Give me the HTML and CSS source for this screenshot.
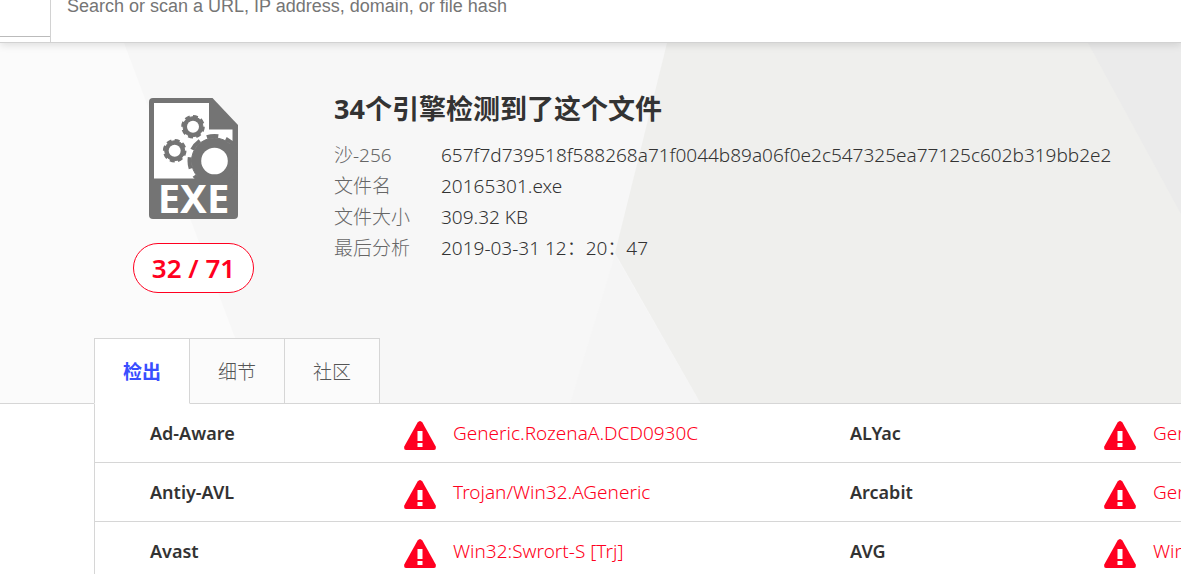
FILE: index.html
```html
<!DOCTYPE html>
<html lang="zh-CN">
<head>
  <meta charset="UTF-8" />
  <meta name="viewport" content="width=device-width, initial-scale=1.0"/>
  <title>文件分析</title>
  <link rel="stylesheet" href="styles.css">
</head>
<body>

  <!-- shared icons -->
  <svg class="defs" width="0" height="0" aria-hidden="true">
    <symbol id="warning" viewBox="0 0 32 34">
      <path fill="#ff0020" d="M13.6 6.6Q16 3.4 18.4 6.6L31.6 30.2Q32.6 34 30 34H2Q-.6 34 .4 30.2Z"/>
      <path fill="#fff" d="M13.5 15h5v10h-5zM13.5 27h5v4h-5z"/>
    </symbol>
  </svg>

  <header class="topbar">
    <div class="topbar-menu"></div>
    <input class="search" type="text" aria-label="Search" placeholder="Search or scan a URL, IP address, domain, or file hash">
  </header>

  <section class="summary">
    <svg class="summary-bg" viewBox="0 0 1181 361" preserveAspectRatio="xMinYMin slice" aria-hidden="true">
      <path fill="#fbfbfb" d="M0 0H124L260 361H0Z"/>
      <path fill="#f5f5f5" d="M615 212L570 361H701Z"/>
      <path fill="#efefed" d="M667 0H1181V361H701L615 210Z"/>
      <path fill="#ebebeb" d="M1088 0H1181V171Z"/>
    </svg>

    <div class="summary-main">
      <div class="file">
        <svg class="file-icon" viewBox="0 0 89 121" role="img" aria-label="EXE">
          <path fill="#747474" d="M4 0H63.5L89 27V117Q89 121 85 121H4Q0 121 0 117V4Q0 0 4 0Z"/>
          <path fill="#fff" d="M5 5H60V31.5H83.5V43L66 64L48 80.5H5Z"/>
          <g fill="#747474" stroke="#747474">
            <circle cx="44" cy="28.7" r="10"/>
            <circle cx="44" cy="28.7" r="10.5" fill="none" stroke-width="2.6" pathLength="16" stroke-dasharray="1.2 .8"/>
            <circle cx="25.7" cy="52.7" r="10"/>
            <circle cx="25.7" cy="52.7" r="10.5" fill="none" stroke-width="2.6" pathLength="16" stroke-dasharray="1.2 .8"/>
            <circle cx="65.5" cy="63" r="23"/>
            <circle cx="65.5" cy="63" r="25" fill="none" stroke-width="4" pathLength="16" stroke-dasharray="1.2 .8" stroke-dashoffset=".8"/>
          </g>
          <circle fill="#fff" cx="44" cy="28.7" r="6"/>
          <circle fill="#fff" cx="25.7" cy="52.7" r="6"/>
          <circle fill="#fff" cx="65.5" cy="63" r="13.3"/>
          <text class="file-type" x="44.5" y="115" text-anchor="middle">EXE</text>
        </svg>
        <div class="score">32 / 71</div>
      </div>

      <div class="info">
        <h1>34个引擎检测到了这个文件</h1>
        <dl class="details">
          <dt>沙-256</dt>
          <dd>657f7d739518f588268a71f0044b89a06f0e2c547325ea77125c602b319bb2e2</dd>
          <dt>文件名</dt>
          <dd>20165301.exe</dd>
          <dt>文件大小</dt>
          <dd>309.32 KB</dd>
          <dt>最后分析</dt>
          <dd>2019-03-31 12：20：47</dd>
        </dl>
      </div>
    </div>

    <nav class="tabs">
      <button class="tab active" type="button">检出</button>
      <button class="tab" type="button">细节</button>
      <button class="tab" type="button">社区</button>
    </nav>
  </section>

  <main class="results">
    <table>
      <tbody>
        <tr>
          <th scope="row">Ad-Aware</th>
          <td class="icon"><svg><use href="#warning"/></svg></td>
          <td>Generic.RozenaA.DCD0930C</td>
          <th scope="row">ALYac</th>
          <td class="icon"><svg><use href="#warning"/></svg></td>
          <td>Generic.RozenaA.DCD0930C</td>
        </tr>
        <tr>
          <th scope="row">Antiy-AVL</th>
          <td class="icon"><svg><use href="#warning"/></svg></td>
          <td>Trojan/Win32.AGeneric</td>
          <th scope="row">Arcabit</th>
          <td class="icon"><svg><use href="#warning"/></svg></td>
          <td>Generic.RozenaA.DCD0930C</td>
        </tr>
        <tr>
          <th scope="row">Avast</th>
          <td class="icon"><svg><use href="#warning"/></svg></td>
          <td>Win32:Swrort-S [Trj]</td>
          <th scope="row">AVG</th>
          <td class="icon"><svg><use href="#warning"/></svg></td>
          <td>Win32:Swrort-S [Trj]</td>
        </tr>
      </tbody>
    </table>
  </main>

</body>
</html>
```
FILE: styles.css
```css
* {
  box-sizing: border-box;
}

body {
  margin: 0;
  font-family: "Noto Sans", "Noto Sans CJK SC", sans-serif;
  font-size: 18px;
  color: #333;
  background: white;
  overflow: hidden;
}

.defs {
  position: absolute;
}

.topbar {
  position: relative;
  z-index: 1;
  display: flex;
  align-items: flex-end;
  height: 43px;
  overflow: hidden;
  background: white;
  border-bottom: 1px solid #d2d2d2;
  box-shadow: 0 2px 8px rgba(0,0,0,0.12);
}

.topbar-menu {
  width: 50px;
  height: 37px;
  margin-bottom: 5px;
  border-bottom: 1px solid #bbb;
}

.search {
  flex: 1;
  height: 72px;
  padding: 0 16px;
  border: none;
  border-left: 1px solid #d2d2d2;
  outline: none;
  font-family: "Liberation Sans", Arial, sans-serif;
  font-size: 18px;
}

.search::placeholder {
  color: #757575;
}

.summary {
  position: relative;
  background: #f7f7f7;
  border-bottom: 1px solid #d6d6d6;
}

.summary-bg {
  position: absolute;
  top: 0;
  left: 0;
  width: 100%;
  height: 100%;
}

.summary-main {
  position: relative;
  display: flex;
  gap: 80px;
  padding: 48px 48px 45px 133px;
}

.file {
  display: flex;
  flex-direction: column;
  align-items: center;
  gap: 24px;
  padding-top: 7px;
}

.file-icon {
  width: 89px;
  height: 121px;
}

.file-type {
  font-family: "Noto Sans", sans-serif;
  font-size: 40px;
  font-weight: bold;
  fill: white;
}

.score {
  width: 121px;
  height: 50px;
  border: 1px solid #ff0020;
  border-radius: 25px;
  background: white;
  color: #ff0020;
  font-size: 26px;
  font-weight: 600;
  line-height: 48px;
  text-align: center;
}

h1 {
  margin: 0 0 13px;
  font-size: 27px;
  line-height: 36px;
  font-weight: bold;
}

.details {
  display: grid;
  grid-template-columns: 107px auto;
  margin: 0;
  font-size: 19px;
  line-height: 31px;
}

.details dt {
  color: #666;
  font-weight: 300;
}

.details dd {
  margin: 0;
  font-weight: 300;
}

.tabs {
  position: relative;
  display: flex;
  margin: 0 0 -1px 94px;
}

.tab {
  width: 95px;
  height: 66px;
  padding: 0;
  border: 1px solid #d6d6d6;
  border-left: none;
  background: #fbfbfb;
  color: #555;
  font-family: inherit;
  font-size: 19px;
  font-weight: 300;
  cursor: pointer;
}

.tab.active {
  width: 96px;
  border-left: 1px solid #d6d6d6;
  border-bottom-color: white;
  background: white;
  color: #394eff;
  font-weight: bold;
}

.results {
  margin-left: 94px;
  border-left: 1px solid #d6d6d6;
  overflow: hidden;
}

table {
  width: 1400px;
  table-layout: fixed;
  border-spacing: 0;
}

th, td {
  height: 59px;
  padding: 0;
  border-bottom: 1px solid #d6d6d6;
  text-align: left;
  white-space: nowrap;
}

th {
  width: 309px;
  padding-left: 55px;
  font-weight: 600;
}

td {
  color: #ff0020;
  font-size: 19px;
  font-weight: 300;
}

.icon {
  width: 49px;
}

.icon svg {
  display: block;
  width: 32px;
  height: 34px;
}
```
